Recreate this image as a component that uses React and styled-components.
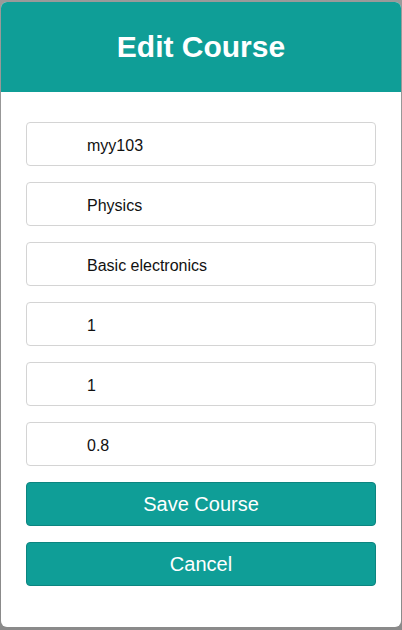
import React, {useState} from "react";
import styled, {createGlobalStyle} from "styled-components";

const GlobalStyle = createGlobalStyle`
    html, body {
        margin: 0;
        padding: 0;
        background: #8f8f8f;
        font-family: "Liberation Sans", Arial, sans-serif;
    }
`;

const Backdrop = styled.div`
    width: 402px;
    height: 630px;
    padding: 2px 1px 3px;
    box-sizing: border-box;
    background: linear-gradient(180deg, #9a9a9a 0%, #8a8a8a 100%);
`;

const Modal = styled.div`
    width: 400px;
    height: 625px;
    background: #ffffff;
    border-radius: 6px;
    overflow: hidden;
    display: flex;
    flex-direction: column;
`;

const Header = styled.div`
    height: 90px;
    background: #0f9e97;
    display: flex;
    align-items: center;
    justify-content: center;
`;

const Title = styled.h1`
    margin: 0;
    color: #ffffff;
    font-size: 30px;
    font-weight: bold;
`;

const Form = styled.form`
    display: flex;
    flex-direction: column;
    gap: 16px;
    padding: 30px 25px 0;
`;

const Field = styled.input`
    width: 350px;
    height: 44px;
    box-sizing: border-box;
    border: 1px solid #d4d4d4;
    border-radius: 4px;
    padding: 3px 0 0 60px;
    font-family: "Liberation Sans", Arial, sans-serif;
    font-size: 16px;
    color: #111;
    outline: none;
`;

const ActionButton = styled.button`
    width: 350px;
    height: 44px;
    box-sizing: border-box;
    border: 1px solid #0c8580;
    border-radius: 4px;
    background: #0f9e97;
    color: #ffffff;
    font-family: "Liberation Sans", Arial, sans-serif;
    font-size: 20px;
    padding: 1px 0 0;
    cursor: pointer;
`;

export default function App() {
    const [values, setValues] = useState(["myy103", "Physics", "Basic electronics", "1", "1", "0.8"])

    const update = (i, v) => {
        const next = [...values]
        next[i] = v
        setValues(next)
    }

    return <>
        <GlobalStyle/>
        <Backdrop>
            <Modal>
                <Header>
                    <Title>Edit Course</Title>
                </Header>
                <Form onSubmit={e => e.preventDefault()}>
                    {values.map((v, i) =>
                        <Field key={i} value={v} onChange={e => update(i, e.target.value)}/>
                    )}
                    <ActionButton type="submit">Save Course</ActionButton>
                    <ActionButton type="button">Cancel</ActionButton>
                </Form>
            </Modal>
        </Backdrop>
    </>
}
